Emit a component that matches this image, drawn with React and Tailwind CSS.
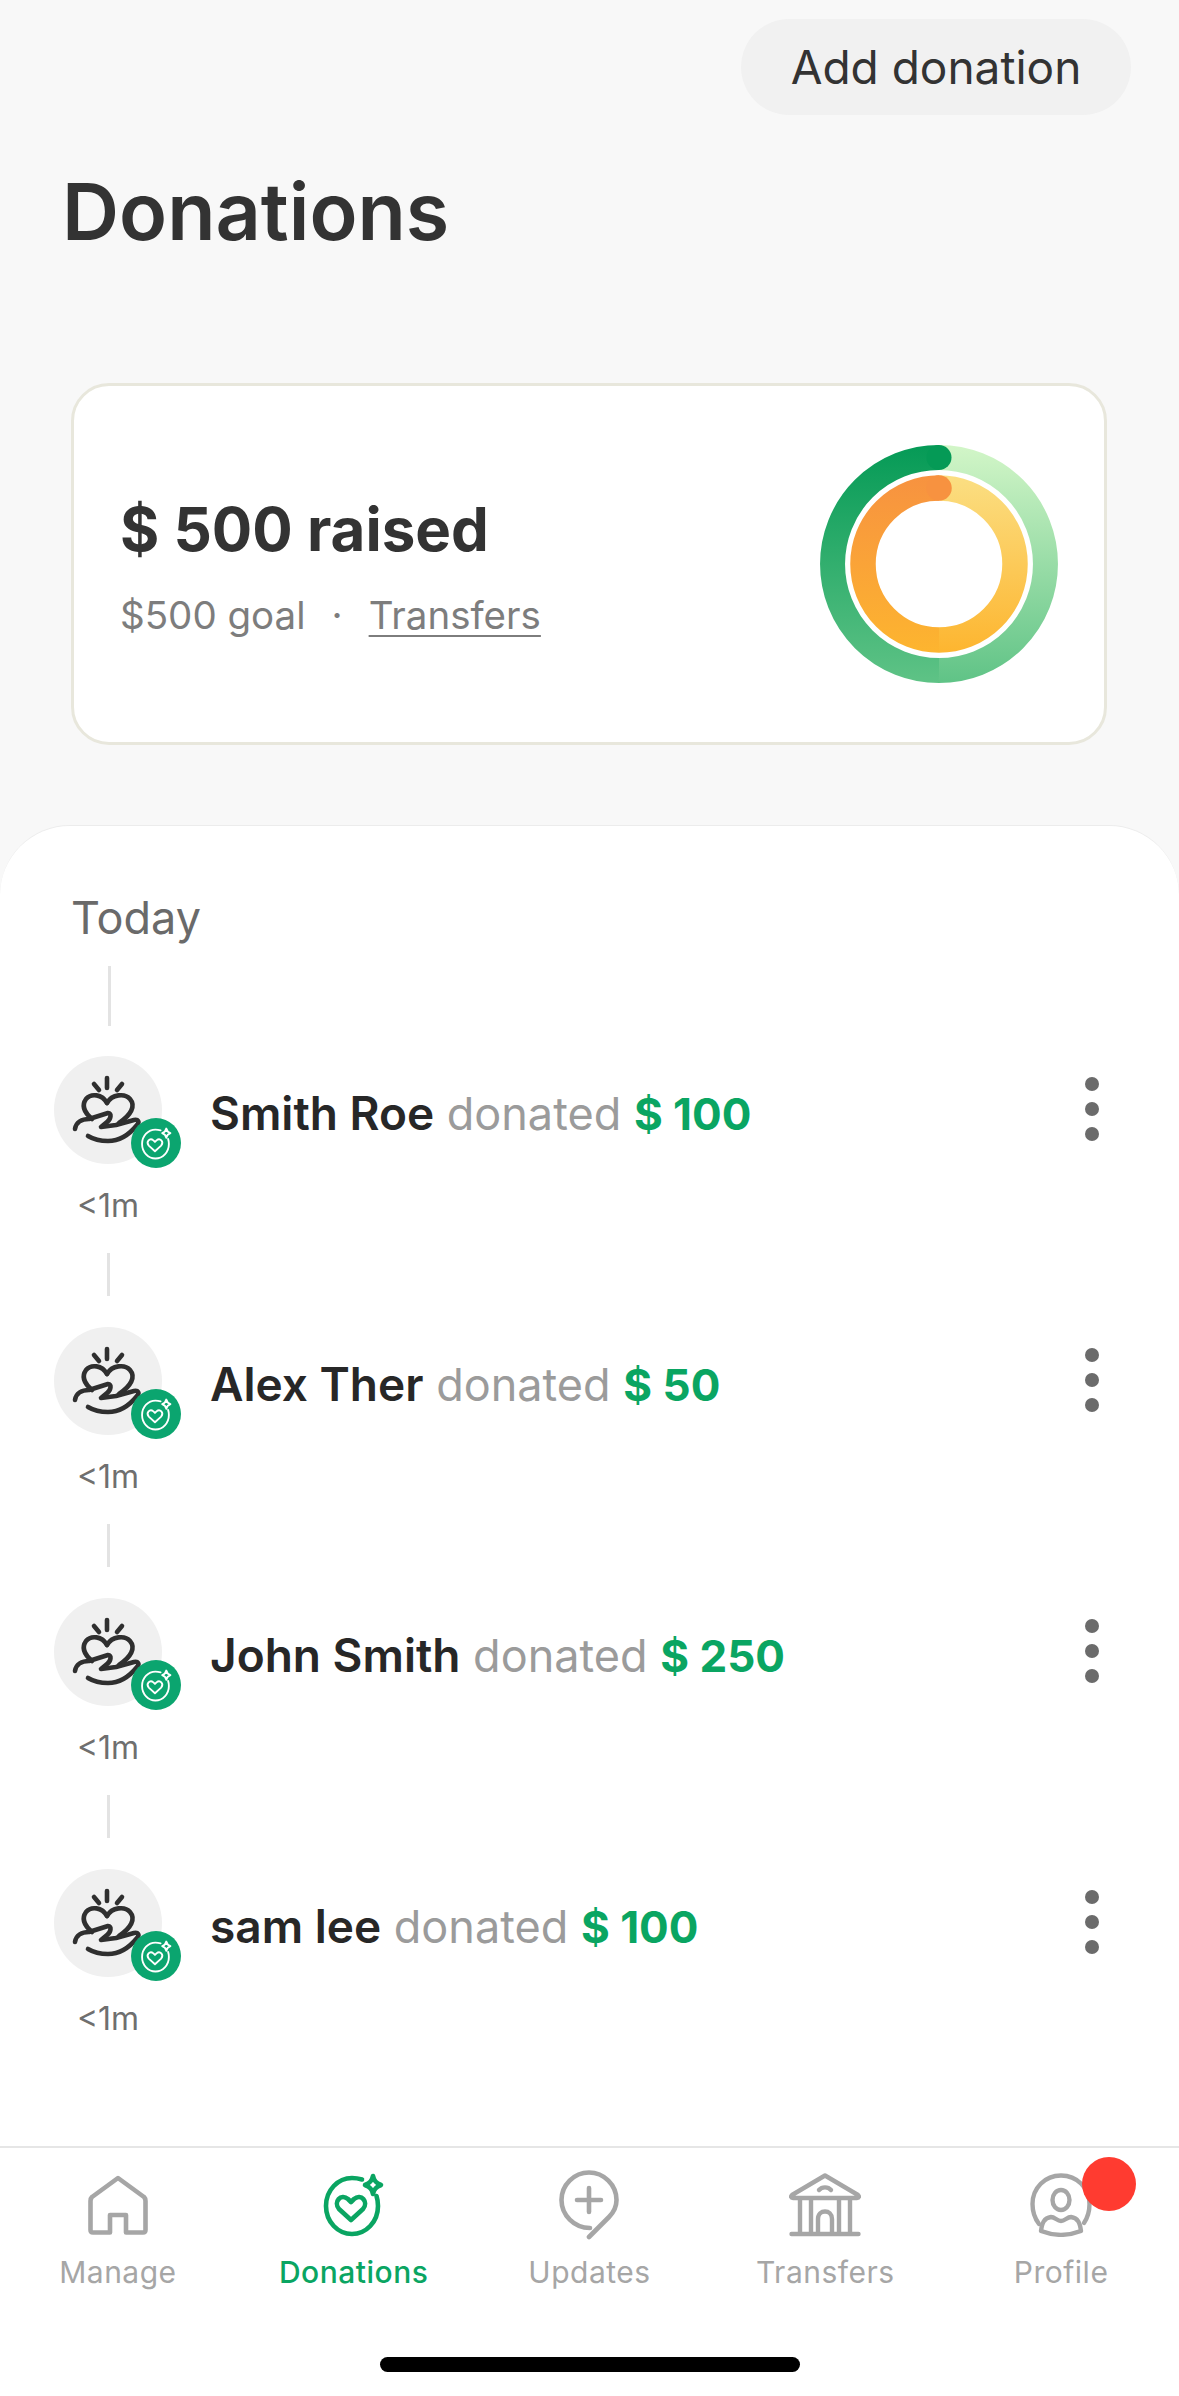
const donations = [
  { name: 'Smith Roe', amount: '$ 100' },
  { name: 'Alex Ther', amount: '$ 50' },
  { name: 'John Smith', amount: '$ 250' },
  { name: 'sam lee', amount: '$ 100', last: true },
];

function GoalRings() {
  return (
    <svg width="240" height="240" viewBox="0 0 240 240" fill="none">
      <defs>
        <linearGradient id="outerLeft" gradientUnits="userSpaceOnUse" x1="0" y1="0" x2="0" y2="240">
          <stop offset="0" stopColor="#059a56" />
          <stop offset="1" stopColor="#5fc386" />
        </linearGradient>
        <linearGradient id="outerRight" gradientUnits="userSpaceOnUse" x1="0" y1="0" x2="0" y2="240">
          <stop offset="0" stopColor="#d3f6c8" />
          <stop offset="1" stopColor="#5fc386" />
        </linearGradient>
        <linearGradient id="innerLeft" gradientUnits="userSpaceOnUse" x1="0" y1="30" x2="0" y2="210">
          <stop offset="0" stopColor="#f79240" />
          <stop offset="1" stopColor="#fdb52f" />
        </linearGradient>
        <linearGradient id="innerRight" gradientUnits="userSpaceOnUse" x1="0" y1="30" x2="0" y2="210">
          <stop offset="0" stopColor="#fbdf83" />
          <stop offset="1" stopColor="#fdb52f" />
        </linearGradient>
      </defs>
      <path d="M120 13.5A106.5 106.5 0 0 1 120 226.5" stroke="url(#outerRight)" strokeWidth="25" />
      <path d="M120 226.5A106.5 106.5 0 0 1 120 13.5" stroke="url(#outerLeft)" strokeWidth="25" />
      <circle cx="120" cy="13.5" r="12.5" fill="#059a56" />
      <path d="M120 44A76 76 0 0 1 120 196" stroke="url(#innerRight)" strokeWidth="25.5" />
      <path d="M120 196A76 76 0 0 1 120 44" stroke="url(#innerLeft)" strokeWidth="25.5" />
      <circle cx="120" cy="44" r="12.75" fill="#f79240" />
    </svg>
  );
}

function HandHeart() {
  return (
    <svg width="108" height="108" viewBox="0 0 108 108" fill="none" stroke="#2f2f2f" strokeWidth="4.6" strokeLinecap="round" strokeLinejoin="round">
      <path d="M53 22V32" />
      <path d="M40 28L45 34" />
      <path d="M68 28L63 34" />
      <path d="M53 47C48 38 37 37 32 43C27 50 31 57 38 63" />
      <path d="M53 47C58 38 71 37 76 43C82 50 77 59 65 67" />
      <path d="M21 73C22 66 28 63 35 63L54 57C58 57 57 63 53 66L47 71L62 69L80 64C84 63 86 66 83 69C75 79 65 85 54 85C46 85 39 83 34 80" />
    </svg>
  );
}

function HeartSpark({ size, color, stroke }) {
  return (
    <svg width={size} height={size} viewBox="0 0 64 64" fill="none" stroke={color} strokeWidth={stroke} strokeLinecap="round" strokeLinejoin="round">
      <path d="M40 6.500C36 5.300 33 5 30 5C16 5 4 17 4 33C4 49 16 61 30 61C44 61 56 49 56 33C56 29 55.500 26 54.500 23" />
      <path d="M29 47L17 36C11 29 19 20 26 26L29 29L32 26C39 20 47 29 41 36Z" />
      <path d="M51 3C52 8 54 10 59 12C54 14 52 16 51 21C50 16 48 14 43 12C48 10 50 8 51 3Z" />
    </svg>
  );
}

function HomeIcon() {
  return (
    <svg width="60" height="60" viewBox="0 0 60 60" fill="none" stroke="#a6a6a6" strokeWidth="4.6" strokeLinejoin="round">
      <path d="M30 3L4 22C3 23 2.500 24 2.500 26V55C2.500 56.500 3.500 57.500 5 57.500H22V40H38V57.500H55C56.500 57.500 57.500 56.500 57.500 55V26C57.500 24 57 23 56 22Z" />
    </svg>
  );
}

function UpdatesIcon() {
  return (
    <svg width="60" height="70" viewBox="0 0 60 70" fill="none" stroke="#a6a6a6" strokeWidth="4.6" strokeLinecap="round">
      <path d="M31 58C15 58 2.500 45 2.500 30C2.500 15 15 2.500 30 2.500C45 2.500 57.500 15 57.500 30C57.500 38 54 43 50 47L30 67" />
      <path d="M30 18V42M18 30H42" />
    </svg>
  );
}

function BankIcon() {
  return (
    <svg width="72" height="64" viewBox="0 0 72 64" fill="none" stroke="#a6a6a6" strokeWidth="4.4" strokeLinecap="round" strokeLinejoin="round">
      <path d="M36 2.500L3 22C1.500 23.500 2 25 4 25H68C70 25 70.500 23.500 69 22Z" />
      <path d="M30 17C33 13.500 39 13.500 42 17" />
      <path d="M11 26V60M22 26V60M50 26V60M61 26V60" />
      <path d="M29 60V46C29 36 43 36 43 46V60" />
      <path d="M2.500 61H69.500" />
    </svg>
  );
}

function ProfileIcon() {
  return (
    <svg width="62" height="64" viewBox="0 0 62 64" fill="none" stroke="#a6a6a6" strokeWidth="4.4" strokeLinecap="round" strokeLinejoin="round">
      <path d="M9 51C4.500 45 2.500 38 2.500 31C2.500 15 15 2.500 31 2.500C47 2.500 59.500 15 59.500 31C59.500 38 58 44 54 50" />
      <ellipse cx="31" cy="27" rx="8.500" ry="10" />
      <path d="M11 58C12 50 14 45 21 44C25 44 27 48 31 48C35 48 37 44 41 44C48 45 50 50 51 58C38 63 24 63 11 58Z" />
    </svg>
  );
}

function DonationRow({ name, amount, last }) {
  return (
    <div className="flex items-start pl-[54px] pr-[80px]">
      <div className="flex w-[108px] flex-col items-center">
        <div className="relative flex h-[108px] w-[108px] items-center justify-center rounded-full bg-[#f0f0f0]">
          <HandHeart />
          <div className="absolute left-[77px] top-[62px] flex h-[50px] w-[50px] items-center justify-center rounded-full bg-[#0ba56f]">
            <HeartSpark size={33} color="#ffffff" stroke={3.600} />
          </div>
        </div>
        <div className="flex h-[89px] items-center pb-[5px] text-[32px] text-[#6f6f6f]">&lt;1m</div>
        {!last && <div className="h-[43px] w-[3px] bg-[#e3e3e3]" />}
        <div className="h-[31px]" />
      </div>
      <div className="ml-[48px] flex h-[108px] flex-1 items-center justify-between">
        <p className="pt-[6px] text-[45px] leading-none">
          <span className="text-[46px] font-semibold text-[#272727]">{name}</span>
          <span className="text-[#9b9b9b]"> donated </span>
          <span className="text-[44px] font-bold text-[#0aa562]">{amount}</span>
        </p>
        <div className="flex flex-col gap-[11px] pb-[2px]">
          <span className="h-[14px] w-[14px] rounded-full bg-[#6b6b6b]" />
          <span className="h-[14px] w-[14px] rounded-full bg-[#6b6b6b]" />
          <span className="h-[14px] w-[14px] rounded-full bg-[#6b6b6b]" />
        </div>
      </div>
    </div>
  );
}

function NavItem({ label, active, children }) {
  return (
    <div className="flex flex-col items-center">
      <div className="flex h-[72px] items-center justify-center">{children}</div>
      <span className={`mt-[13px] text-[30px] leading-[36px] tracking-[0.5px] ${active ? 'font-medium text-[#0aa562]' : 'text-[#a6a6a6]'}`}>{label}</span>
    </div>
  );
}

export default function App() {
  return (
    <div className="flex h-[2396px] w-[1179px] flex-col overflow-hidden bg-[#f8f8f8] font-['Inter',sans-serif]">
      <div className="flex h-[825px] shrink-0 flex-col">
        <div className="mr-[48px] mt-[19px] flex h-[96px] w-[390px] items-center justify-center self-end rounded-full bg-[#f1f1f1] text-[46px] text-[#333333]">
          Add donation
        </div>
        <h1 className="ml-[62px] mt-[41px] text-[79px] font-semibold leading-[110px] text-[#333333]">Donations</h1>
        <div className="ml-[71px] mt-[117px] flex h-[362px] w-[1036px] items-center justify-between rounded-[38px] border-[3px] border-[#e8e7dc] bg-white pl-[46px] pr-[45px]">
          <div>
            <div className="text-[60px] font-bold leading-[80px] text-[#333333]">$ 500 raised</div>
            <div className="mt-[21px] flex items-center text-[38.5px] leading-[50px] text-[#7d7d7d]">
              <span>$500 goal</span>
              <span className="mx-[26px]">·</span>
              <span className="underline underline-offset-[6px] decoration-[2px]">Transfers</span>
            </div>
          </div>
          <GoalRings />
        </div>
      </div>

      <div className="flex flex-1 flex-col rounded-t-[70px] border-t border-[#ececec] bg-white">
        <div className="ml-[71px] mt-[62px] text-[45px] leading-[60px] text-[#6a6a6a]">Today</div>
        <div className="ml-[108px] mt-[18px] h-[60px] w-[3px] bg-[#e3e3e3]" />
        <div className="mt-[30px] h-[1090px]">
          {donations.map((d) => (
            <DonationRow key={d.name} name={d.name} amount={d.amount} last={d.last} />
          ))}
        </div>
        <div className="relative flex-1 border-t-[2px] border-[#e6e6e6]">
          <div className="grid grid-cols-5 pt-[21px]">
            <NavItem label="Manage"><HomeIcon /></NavItem>
            <NavItem label="Donations" active><HeartSpark size={64} color="#0aa562" stroke={4.600} /></NavItem>
            <NavItem label="Updates"><UpdatesIcon /></NavItem>
            <NavItem label="Transfers"><BankIcon /></NavItem>
            <NavItem label="Profile"><ProfileIcon /></NavItem>
          </div>
          <div className="absolute left-[1082px] top-[9px] h-[54px] w-[54px] rounded-full bg-[#ff3b30]" />
          <div className="absolute left-[380px] top-[209px] h-[15px] w-[420px] rounded-full bg-black" />
        </div>
      </div>
    </div>
  );
}
